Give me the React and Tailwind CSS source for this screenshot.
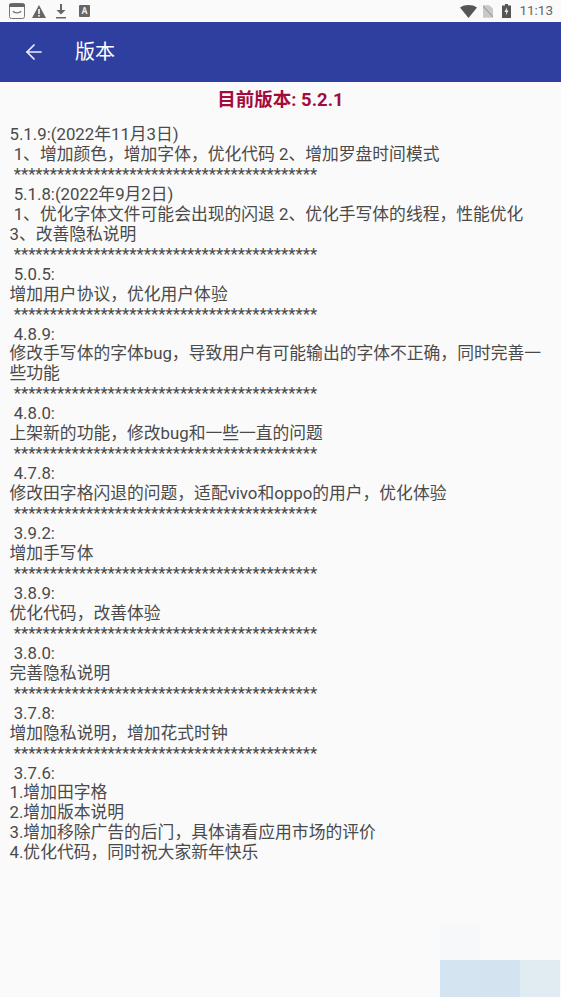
import React from 'react';
import { ArrowLeft } from 'lucide-react';

const stars = '*'.repeat(42);

const changelog = [
  '5.1.9:(2022年11月3日)',
  ' 1、增加颜色，增加字体，优化代码 2、增加罗盘时间模式',
  ' ' + stars,
  ' 5.1.8:(2022年9月2日)',
  ' 1、优化字体文件可能会出现的闪退 2、优化手写体的线程，性能优化',
  '3、改善隐私说明',
  ' ' + stars,
  ' 5.0.5:',
  '增加用户协议，优化用户体验',
  ' ' + stars,
  ' 4.8.9:',
  '修改手写体的字体bug，导致用户有可能输出的字体不正确，同时完善一些功能',
  ' ' + stars,
  ' 4.8.0:',
  '上架新的功能，修改bug和一些一直的问题',
  ' ' + stars,
  ' 4.7.8:',
  '修改田字格闪退的问题，适配vivo和oppo的用户，优化体验',
  ' ' + stars,
  ' 3.9.2:',
  '增加手写体',
  ' ' + stars,
  ' 3.8.9:',
  '优化代码，改善体验',
  ' ' + stars,
  ' 3.8.0:',
  '完善隐私说明',
  ' ' + stars,
  ' 3.7.8:',
  '增加隐私说明，增加花式时钟',
  ' ' + stars,
  ' 3.7.6:',
  '1.增加田字格',
  '2.增加版本说明',
  '3.增加移除广告的后门，具体请看应用市场的评价',
  '4.优化代码，同时祝大家新年快乐',
];

const StatusLeft = () => (
  <div className="flex items-center text-[#666]">
    <svg width="16" height="16" viewBox="0 0 16 16">
      <rect x="0.5" y="0.5" width="15" height="15" rx="2" fill="#fafafa" stroke="#777" />
      <path d="M0 2.5a2 2 0 0 1 2-2h12a2 2 0 0 1 2 2V4H0z" fill="#666" />
      <path d="M4 8c1 2.4 7 2.4 8 0" fill="none" stroke="#777" strokeWidth="1.2" />
    </svg>
    <svg className="ml-[7px]" width="14" height="13" viewBox="0 0 14 13">
      <path d="M7 0l7 13H0z" fill="#666" />
      <rect x="6.2" y="4" width="1.6" height="5" fill="#fafafa" />
      <rect x="6.2" y="10" width="1.6" height="1.6" fill="#fafafa" />
    </svg>
    <svg className="ml-[9px]" width="12" height="15" viewBox="0 0 12 15">
      <path d="M5 0h2v6h3.5L6 10.5 1.5 6H5z" fill="#666" />
      <rect x="1" y="13" width="10" height="1.5" fill="#666" />
    </svg>
    <div className="ml-[12px] w-[11px] h-[12px] rounded-[1px] bg-[#666] flex items-center justify-center text-[9px] leading-none font-bold text-[#eee]">
      A
    </div>
  </div>
);

const StatusRight = () => (
  <div className="flex items-center text-[#666]">
    <svg width="17" height="13" viewBox="0 0 17 13">
      <path d="M0 2.5C4.8-.8 12.2-.8 17 2.5L8.5 13z" fill="#555" />
    </svg>
    <svg className="ml-[6px]" width="10" height="13" viewBox="0 0 11 14">
      <path d="M0 0h7l4 4v10H0z" fill="#c8c8c8" />
      <path d="M0 1l11 12" stroke="#999" strokeWidth="1.2" />
    </svg>
    <svg className="ml-[9px]" width="9" height="14" viewBox="0 0 9 14">
      <path d="M3 0h3v1.5h3V14H0V1.5h3z" fill="#555" />
      <path d="M5 3L2.5 8H4.3L3.8 11.5 6.5 6.5H4.8z" fill="#eee" />
    </svg>
    <span className="ml-[8px] text-[13.5px] leading-none text-[#666]">11:13</span>
  </div>
);

export default function App() {
  return (
    <div className="relative h-[997px] overflow-hidden bg-[#fafafa] font-['Roboto','Noto_Sans_CJK_SC',sans-serif]">
      <div className="h-[22px] pl-[9px] pr-[8px] flex items-center justify-between">
        <StatusLeft />
        <StatusRight />
      </div>
      <header className="h-[60px] bg-[#2e3f9f] flex items-center text-white">
        <ArrowLeft className="ml-[22px]" size={24} strokeWidth={1.7} color="#eef" />
        <h1 className="ml-[29px] text-[20px] font-normal">版本</h1>
      </header>
      <main>
        <h2 className="mt-[7px] h-[22px] leading-[22px] text-center text-[18.5px] font-bold text-[#a50a3c]">
          目前版本: 5.2.1
        </h2>
        <div className="mt-[14px] pl-[9.5px] pr-[9px] text-[16.8px] leading-[19.95px] text-[#4a4a4a] whitespace-pre-wrap">
          {changelog.map((line, i) => (
            <div key={i}>{line}</div>
          ))}
        </div>
      </main>
      {/* faint ad placeholder blocks in the bottom corner */}
      <div className="absolute right-[1px] bottom-0 w-[120px] h-[74px] grid grid-cols-3 grid-rows-2">
        <div className="bg-[#f7f8fa]" />
        <div className="col-span-2" />
        <div className="bg-[#d4e4f1]" />
        <div className="bg-[#d4e3f0]" />
        <div className="bg-[#e0ebf2]" />
      </div>
    </div>
  );
}
